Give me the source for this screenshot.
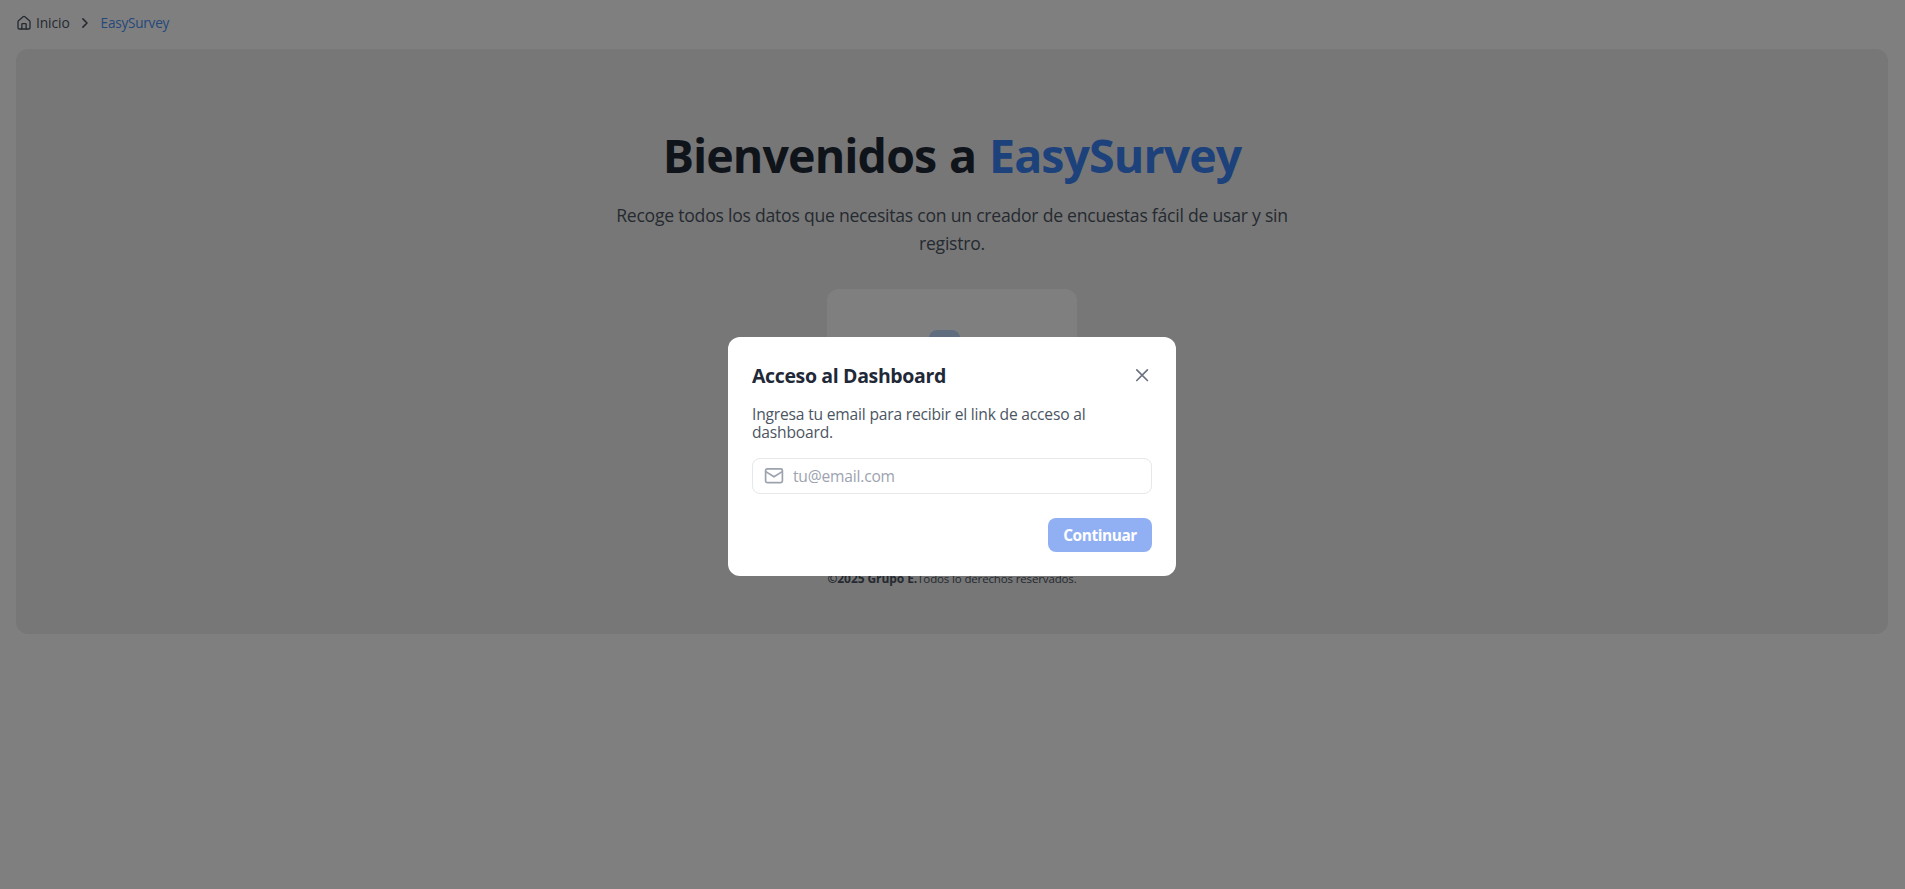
<div class="page">
  <nav class="crumbs" aria-label="Ruta">
    <svg class="home" viewBox="0 0 24 24"><path d="M3 10.2a2 2 0 0 1 .7-1.5l7-6a2 2 0 0 1 2.6 0l7 6a2 2 0 0 1 .7 1.5V19a2 2 0 0 1-2 2H5a2 2 0 0 1-2-2z" /><path d="M8.8 21v-7a1 1 0 0 1 1-1h4.4a1 1 0 0 1 1 1v7" /></svg>
    <span class="inicio">Inicio</span>
    <svg class="chev" viewBox="0 0 16 16"><path d="M5.9 3.9 10 8l-4.1 4.1" /></svg>
    <span class="current">EasySurvey</span>
  </nav>
  <main class="panel">
    <h1>Bienvenidos a <span class="brand">EasySurvey</span></h1>
    <p class="lead">Recoge todos los datos que necesitas con un creador de encuestas fácil de usar y sin<br />registro.</p>
    <div class="card"><div class="badge"></div></div>
    <footer><b>©2025 Grupo E.</b><span>Todos lo derechos reservados.</span></footer>
  </main>
</div>
<div class="overlay">
  <div class="modal" role="dialog" aria-modal="true" aria-labelledby="title">
    <header>
      <h2 id="title">Acceso al Dashboard</h2>
      <button class="close" aria-label="Cerrar"><svg viewBox="0 0 20 20"><path d="m4.8 4.9 10.6 10.6m0-10.6L4.8 15.5" /></svg></button>
    </header>
    <p class="desc">Ingresa tu email para recibir el link de acceso al<br />dashboard.</p>
    <label class="field">
      <svg viewBox="0 0 20 20"><rect x="1.6" y="2.8" width="16.8" height="13.9" rx="1.6" /><path d="m1.8 5.6 8.2 5.2 8.2-5.2" /></svg>
      <input type="email" placeholder="tu@email.com" />
    </label>
    <button class="go">Continuar</button>
  </div>
</div>

<style>
  :global(body) {
    background: #fff;
    font-family: "Open Sans", "Noto Sans", sans-serif;
  }
  .page {
    padding: 12px 17px 0 16px;
  }
  svg {
    display: block;
    flex: none;
    fill: none;
    stroke: currentColor;
    stroke-linecap: round;
    stroke-linejoin: round;
  }
  button {
    border: 0;
    font-family: inherit;
    cursor: pointer;
  }
  .crumbs {
    display: flex;
    align-items: center;
    height: 22px;
    margin-bottom: 15px;
    font-size: 13.8px;
    color: #4b5563;
  }
  .crumbs span {
    padding-bottom: 1px;
  }
  .home {
    width: 16px;
    height: 16px;
    margin-right: 4px;
    stroke-width: 2;
  }
  .inicio {
    letter-spacing: -0.1px;
  }
  .chev {
    width: 16px;
    height: 16px;
    margin: 0 8px 0 7px;
    stroke-width: 1.6;
  }
  .current {
    font-size: 13.6px;
    letter-spacing: -0.25px;
    color: #4a90f5;
  }
  .panel {
    display: flex;
    flex-direction: column;
    align-items: center;
    box-sizing: border-box;
    height: 585px;
    padding-top: 76px;
    border-radius: 12px;
    background: #eee;
  }
  h1 {
    margin: 0;
    font-size: 46.5px;
    line-height: 60px;
    letter-spacing: -0.9px;
    word-spacing: 1.6px;
    color: #1f2937;
  }
  .brand {
    color: #3b82f6;
  }
  .lead {
    margin: 16px 0 32px;
    font-size: 17.6px;
    line-height: 28px;
    letter-spacing: -0.24px;
    text-align: center;
    color: #4b5563;
  }
  .card {
    width: 250px;
    height: 240px;
    border-radius: 12px;
    background: #fff;
  }
  .badge {
    width: 31px;
    height: 40px;
    margin: 41px 0 0 102px;
    border-radius: 8px;
    background: #bfdbfe;
  }
  footer {
    margin-top: 42px;
    font-size: 12px;
    line-height: 16px;
    letter-spacing: -0.08px;
    white-space: nowrap;
    color: #4b5563;
  }
  footer span {
    font-size: 11.5px;
    letter-spacing: -0.14px;
  }
  .overlay {
    position: fixed;
    inset: 0;
    display: flex;
    align-items: center;
    justify-content: center;
    padding: 24px 1px 0 0;
    background: rgba(0, 0, 0, 0.5);
  }
  .modal {
    display: flex;
    flex-direction: column;
    width: 400px;
    padding: 24px;
    border-radius: 12px;
    background: #fff;
  }
  header {
    display: flex;
    align-items: center;
    justify-content: space-between;
    height: 28px;
  }
  h2 {
    margin: 0;
    padding-top: 2px;
    font-size: 19.5px;
    line-height: 28px;
    letter-spacing: -0.36px;
    color: #1f2937;
  }
  .close {
    padding: 0;
    background: none;
    color: #6b7280;
  }
  .close svg {
    width: 20px;
    height: 20px;
    stroke-width: 1.7;
  }
  .desc {
    margin: 16px 0 17px;
    font-size: 15.6px;
    line-height: 18px;
    letter-spacing: -0.19px;
    color: #4b5563;
  }
  .field {
    display: flex;
    align-items: center;
    gap: 9px;
    box-sizing: border-box;
    height: 36px;
    padding: 0 11px;
    border: 1px solid #e5e7eb;
    border-radius: 8px;
    color: #9ca3af;
  }
  .field svg {
    width: 20px;
    height: 20px;
    stroke-width: 1.7;
  }
  input {
    flex: 1;
    min-width: 0;
    padding: 0;
    border: 0;
    outline: 0;
    background: none;
    font: 15.6px "Open Sans", "Noto Sans", sans-serif;
    letter-spacing: -0.2px;
  }
  input::placeholder {
    color: #9ca3af;
  }
  .go {
    align-self: flex-end;
    width: 104px;
    height: 34px;
    margin-top: 24px;
    padding: 1px 0 0;
    border-radius: 8px;
    background: #2563eb;
    color: #fff;
    font-size: 15.4px;
    font-weight: 700;
    letter-spacing: -0.4px;
    opacity: 0.5;
  }
</style>
